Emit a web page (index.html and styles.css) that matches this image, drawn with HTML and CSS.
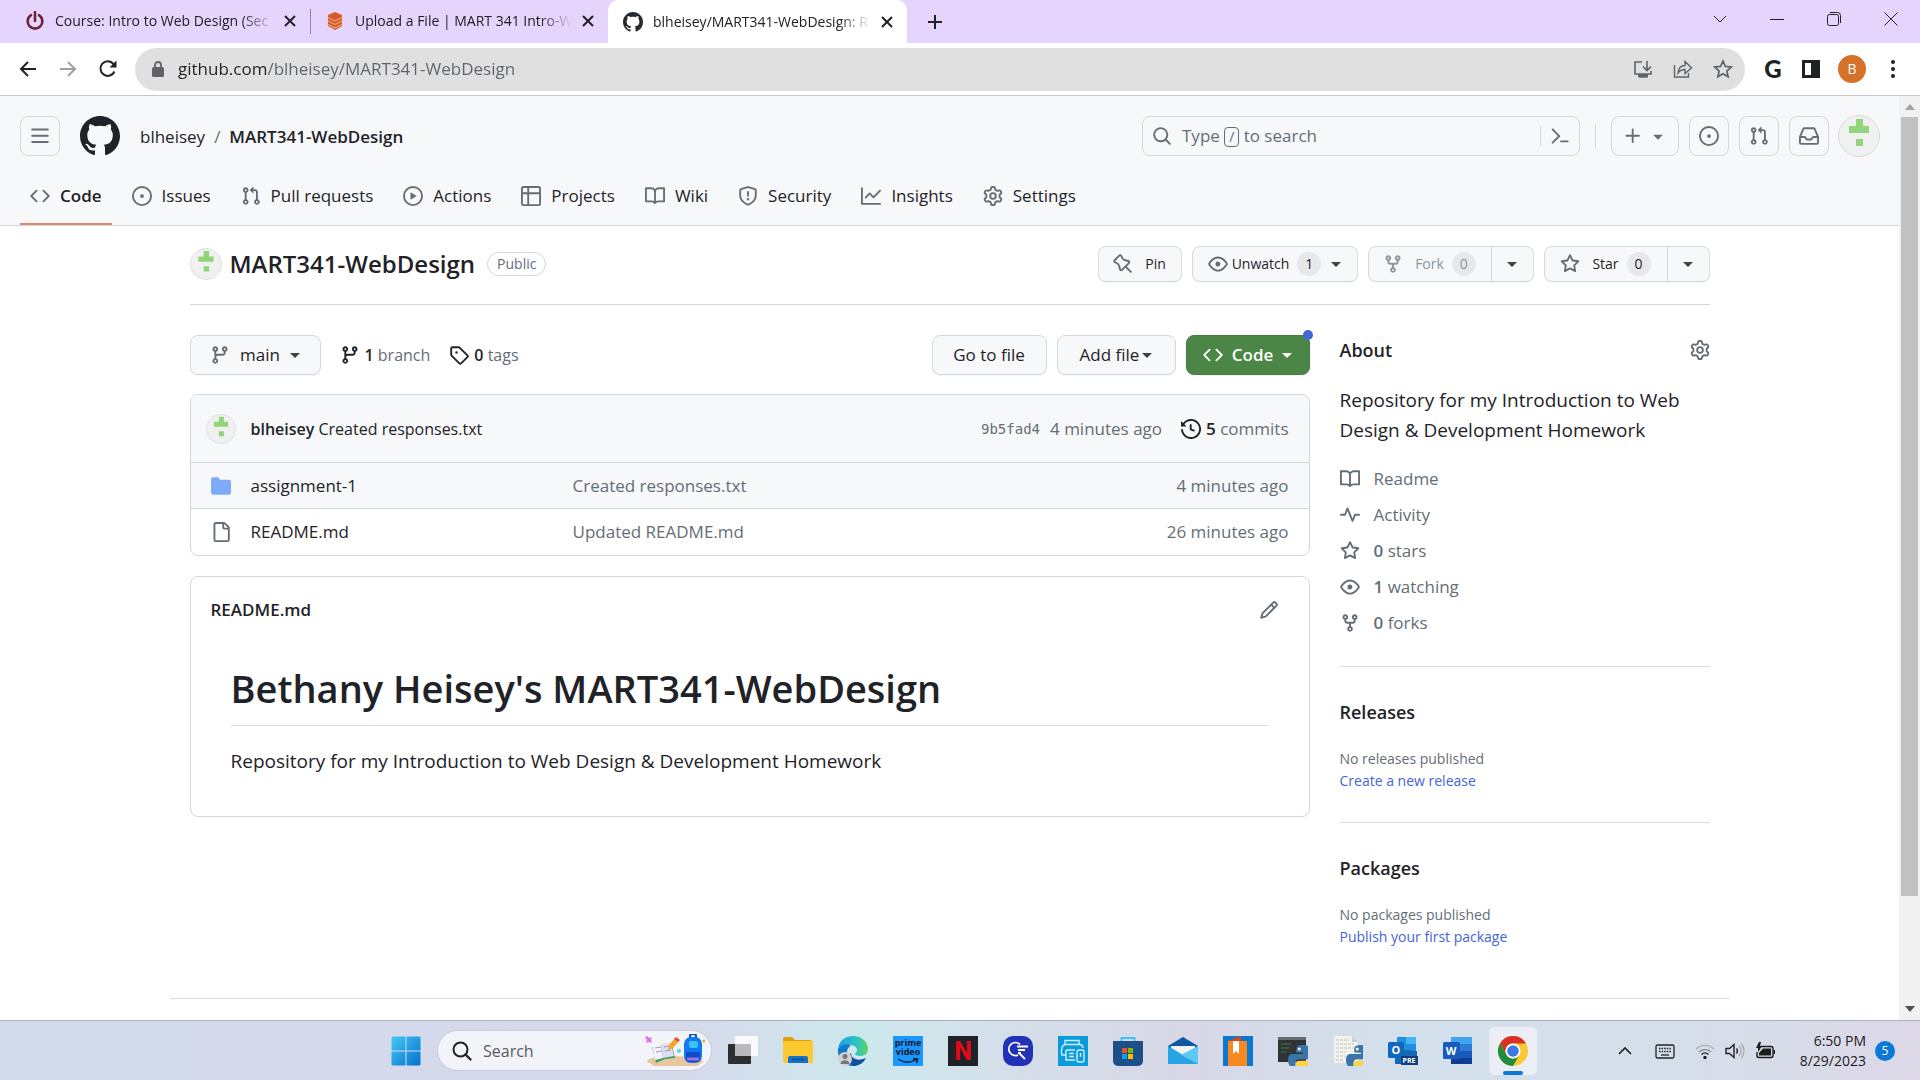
FILE: index.html
```html
<!DOCTYPE html>
<html lang="en">
<head>
<meta charset="utf-8">
<title>blheisey/MART341-WebDesign</title>
<link rel="stylesheet" href="styles.css">
</head>
<body>
<svg class="sprite" aria-hidden="true">
  <symbol id="i-code" viewBox="0 0 16 16"><path d="M4.72 3.22a.75.75 0 011.06 1.06L2.06 8l3.72 3.72a.75.75 0 11-1.06 1.06L.47 8.53a.75.75 0 010-1.06l4.25-4.25zm6.56 0a.75.75 0 10-1.06 1.06L13.94 8l-3.72 3.72a.75.75 0 101.06 1.06l4.25-4.25a.75.75 0 000-1.06l-4.25-4.25z"/></symbol>
  <symbol id="i-issue" viewBox="0 0 16 16"><path d="M8 9.5a1.5 1.5 0 100-3 1.5 1.5 0 000 3z"/><path d="M8 0a8 8 0 100 16A8 8 0 008 0zM1.5 8a6.5 6.5 0 1113 0 6.5 6.5 0 01-13 0z"/></symbol>
  <symbol id="i-pr" viewBox="0 0 16 16"><path d="M1.5 3.25a2.25 2.25 0 1 1 3 2.122v5.256a2.251 2.251 0 1 1-1.5 0V5.372A2.25 2.25 0 0 1 1.5 3.25Zm5.677-.177L9.573.677A.25.25 0 0 1 10 .854V2.5h1A2.5 2.5 0 0 1 13.5 5v5.628a2.251 2.251 0 1 1-1.5 0V5a1 1 0 0 0-1-1h-1v1.646a.25.25 0 0 1-.427.177L7.177 3.427a.25.25 0 0 1 0-.354ZM3.75 2.5a.75.75 0 1 0 0 1.5.75.75 0 0 0 0-1.5Zm0 9.5a.75.75 0 1 0 0 1.5.75.75 0 0 0 0-1.5Zm8.25.75a.75.75 0 1 0 1.5 0 .75.75 0 0 0-1.5 0Z"/></symbol>
  <symbol id="i-play" viewBox="0 0 16 16"><path d="M8 0a8 8 0 1 1 0 16A8 8 0 0 1 8 0ZM1.5 8a6.5 6.5 0 1 0 13 0 6.5 6.5 0 0 0-13 0Zm4.879-2.773 4.264 2.559a.25.25 0 0 1 0 .428l-4.264 2.559A.25.25 0 0 1 6 10.559V5.442a.25.25 0 0 1 .379-.215Z"/></symbol>
  <symbol id="i-table" viewBox="0 0 16 16"><path d="M0 1.75C0 .784.784 0 1.75 0h12.5C15.216 0 16 .784 16 1.75v12.5A1.75 1.75 0 0 1 14.25 16H1.75A1.75 1.75 0 0 1 0 14.25ZM6.5 6.5v8h7.75a.25.25 0 0 0 .25-.25V6.5Zm8-1.5V1.75a.25.25 0 0 0-.25-.25H6.5V5Zm-13 1.5v7.75c0 .138.112.25.25.25H5v-8ZM5 5V1.5H1.75a.25.25 0 0 0-.25.25V5Z"/></symbol>
  <symbol id="i-book" viewBox="0 0 16 16"><path d="M0 1.75A.75.75 0 0 1 .75 1h4.253c1.227 0 2.317.59 3 1.501A3.743 3.743 0 0 1 11.006 1h4.245a.75.75 0 0 1 .75.75v10.5a.75.75 0 0 1-.75.75h-4.507a2.25 2.25 0 0 0-1.591.659l-.622.621a.75.75 0 0 1-1.06 0l-.622-.621A2.25 2.25 0 0 0 5.258 13H.75a.75.75 0 0 1-.75-.75Zm7.251 10.324.004-5.073-.002-2.253A2.25 2.25 0 0 0 5.003 2.5H1.5v9h3.757a3.75 3.75 0 0 1 1.994.574ZM8.755 4.75l-.004 7.322a3.752 3.752 0 0 1 1.992-.572H14.5v-9h-3.495a2.25 2.25 0 0 0-2.25 2.25Z"/></symbol>
  <symbol id="i-shield" viewBox="0 0 16 16"><path d="M7.467.133a1.748 1.748 0 0 1 1.066 0l5.25 1.68A1.75 1.75 0 0 1 15 3.48V7c0 1.566-.32 3.182-1.303 4.682-.983 1.498-2.585 2.813-5.032 3.855a1.697 1.697 0 0 1-1.33 0c-2.447-1.042-4.049-2.357-5.032-3.855C1.32 10.182 1 8.566 1 7V3.48a1.75 1.75 0 0 1 1.217-1.667Zm.61 1.429a.25.25 0 0 0-.153 0l-5.25 1.68a.25.25 0 0 0-.174.238V7c0 1.358.275 2.666 1.057 3.86.784 1.194 2.121 2.34 4.366 3.297a.196.196 0 0 0 .154 0c2.245-.956 3.582-2.104 4.366-3.298C13.225 9.666 13.5 8.36 13.5 7V3.48a.251.251 0 0 0-.174-.237l-5.25-1.68ZM8.75 4.75v3a.75.75 0 0 1-1.5 0v-3a.75.75 0 0 1 1.5 0ZM9 10.5a1 1 0 1 1-2 0 1 1 0 0 1 2 0Z"/></symbol>
  <symbol id="i-graph" viewBox="0 0 16 16"><path d="M1.5 1.75V13.5h13.75a.75.75 0 0 1 0 1.5H.75a.75.75 0 0 1-.75-.75V1.75a.75.75 0 0 1 1.5 0Zm14.28 2.53-5.25 5.25a.75.75 0 0 1-1.06 0L7 7.06 4.28 9.78a.751.751 0 0 1-1.042-.018.751.751 0 0 1-.018-1.042l3.25-3.25a.75.75 0 0 1 1.06 0L10 7.94l4.72-4.72a.751.751 0 0 1 1.042.018.751.751 0 0 1 .018 1.042Z"/></symbol>
  <symbol id="i-gear" viewBox="0 0 16 16"><path d="M8 0a8.2 8.2 0 0 1 .701.031C9.444.095 9.99.645 10.16 1.29l.288 1.107c.018.066.079.158.212.224.231.114.454.243.668.386.123.082.233.09.299.071l1.103-.303c.644-.176 1.392.021 1.82.63.27.385.506.792.704 1.218.315.675.111 1.422-.364 1.891l-.814.806c-.049.048-.098.147-.088.294.016.257.016.515 0 .772-.01.147.038.246.088.294l.814.806c.475.469.679 1.216.364 1.891a7.977 7.977 0 0 1-.704 1.217c-.428.61-1.176.807-1.82.63l-1.102-.302c-.067-.019-.177-.011-.3.071a5.909 5.909 0 0 1-.668.386c-.133.066-.194.158-.211.224l-.29 1.106c-.168.646-.715 1.196-1.458 1.26a8.006 8.006 0 0 1-1.402 0c-.743-.064-1.289-.614-1.458-1.26l-.289-1.106c-.018-.066-.079-.158-.212-.224a5.738 5.738 0 0 1-.668-.386c-.123-.082-.233-.09-.299-.071l-1.103.303c-.644.176-1.392-.021-1.82-.63a8.12 8.12 0 0 1-.704-1.218c-.315-.675-.111-1.422.363-1.891l.815-.806c.05-.048.098-.147.088-.294a6.214 6.214 0 0 1 0-.772c.01-.147-.038-.246-.088-.294l-.815-.806C.635 6.045.431 5.298.746 4.623a7.92 7.92 0 0 1 .704-1.217c.428-.61 1.176-.807 1.82-.63l1.102.302c.067.019.177.011.3-.071.214-.143.437-.272.668-.386.133-.066.194-.158.211-.224l.29-1.106C6.009.645 6.556.095 7.299.03 7.53.01 7.764 0 8 0Zm-.571 1.525c-.036.003-.108.036-.137.146l-.289 1.105c-.147.561-.549.967-.998 1.189-.173.086-.34.183-.5.29-.417.278-.97.423-1.529.27l-1.103-.303c-.109-.03-.175.016-.195.045-.22.312-.412.644-.573.99-.014.031-.021.11.059.19l.815.806c.411.406.562.957.53 1.456a4.709 4.709 0 0 0 0 .582c.032.499-.119 1.05-.53 1.456l-.815.806c-.081.08-.073.159-.059.19.162.346.353.677.573.989.02.03.085.076.195.046l1.102-.303c.56-.153 1.113-.008 1.53.27.161.107.328.204.501.29.447.222.85.629.997 1.189l.289 1.105c.029.109.101.143.137.146a6.6 6.6 0 0 0 1.142 0c.036-.003.108-.036.137-.146l.289-1.105c.147-.561.549-.967.998-1.189.173-.086.34-.183.5-.29.417-.278.97-.423 1.529-.27l1.103.303c.109.029.175-.016.195-.045.22-.313.411-.644.573-.99.014-.031.021-.11-.059-.19l-.815-.806c-.411-.406-.562-.957-.53-1.456a4.709 4.709 0 0 0 0-.582c-.032-.499.119-1.05.53-1.456l.815-.806c.081-.08.073-.159.059-.19a6.464 6.464 0 0 0-.573-.989c-.02-.03-.085-.076-.195-.046l-1.102.303c-.56.153-1.113.008-1.53-.27a4.44 4.44 0 0 0-.501-.29c-.447-.222-.85-.629-.997-1.189l-.289-1.105c-.029-.11-.101-.143-.137-.146a6.6 6.6 0 0 0-1.142 0ZM11 8a3 3 0 1 1-6 0 3 3 0 0 1 6 0ZM9.5 8a1.5 1.5 0 1 0-3.001.001A1.5 1.5 0 0 0 9.5 8Z"/></symbol>
  <symbol id="i-search" viewBox="0 0 16 16"><path d="M10.68 11.74a6 6 0 0 1-7.922-8.982 6 6 0 0 1 8.982 7.922l3.04 3.04a.749.749 0 0 1-.326 1.275.749.749 0 0 1-.734-.215ZM11.5 7a4.499 4.499 0 1 0-8.997 0A4.499 4.499 0 0 0 11.5 7Z"/></symbol>
  <symbol id="i-bars" viewBox="0 0 16 16"><path d="M1 2.75A.75.75 0 0 1 1.75 2h12.5a.75.75 0 0 1 0 1.5H1.75A.75.75 0 0 1 1 2.75Zm0 5A.75.75 0 0 1 1.75 7h12.5a.75.75 0 0 1 0 1.5H1.75A.75.75 0 0 1 1 7.75ZM1.75 12h12.5a.75.75 0 0 1 0 1.5H1.75a.75.75 0 0 1 0-1.5Z"/></symbol>
  <symbol id="i-github" viewBox="0 0 16 16"><path d="M8 0C3.58 0 0 3.58 0 8c0 3.54 2.29 6.53 5.47 7.59.4.07.55-.17.55-.38 0-.19-.01-.82-.01-1.49-2.01.37-2.53-.49-2.69-.94-.09-.23-.48-.94-.82-1.13-.28-.15-.68-.52-.01-.53.63-.01 1.08.58 1.23.82.72 1.21 1.87.87 2.33.66.07-.52.28-.87.51-1.07-1.78-.2-3.64-.89-3.64-3.95 0-.87.31-1.59.82-2.15-.08-.2-.36-1.02.08-2.12 0 0 .67-.21 2.2.82.64-.18 1.32-.27 2-.27.68 0 1.36.09 2 .27 1.53-1.04 2.2-.82 2.2-.82.44 1.1.16 1.92.08 2.12.51.56.82 1.27.82 2.15 0 3.07-1.87 3.75-3.65 3.95.29.25.54.73.54 1.48 0 1.07-.01 1.93-.01 2.2 0 .21.15.46.55.38A8.013 8.013 0 0016 8c0-4.42-3.58-8-8-8z"/></symbol>
  <symbol id="i-prompt" viewBox="0 0 16 16"><path d="m6.354 8.04-4.773 4.773a.75.75 0 1 0 1.061 1.06L7.945 8.57a.75.75 0 0 0 0-1.06L2.642 2.206a.75.75 0 0 0-1.06 1.061L6.353 8.04ZM8.75 11.5a.75.75 0 0 0 0 1.5h5.5a.75.75 0 0 0 0-1.5h-5.5Z"/></symbol>
  <symbol id="i-plus" viewBox="0 0 16 16"><path d="M7.75 2a.75.75 0 0 1 .75.75V7h4.25a.75.75 0 0 1 0 1.5H8.5v4.25a.75.75 0 0 1-1.5 0V8.5H2.75a.75.75 0 0 1 0-1.5H7V2.75A.75.75 0 0 1 7.75 2Z"/></symbol>
  <symbol id="i-inbox" viewBox="0 0 16 16"><path d="M2.8 2.06A1.75 1.75 0 0 1 4.41 1h7.18c.7 0 1.333.417 1.61 1.06l2.74 6.395c.04.093.06.194.06.295v4.5A1.75 1.75 0 0 1 14.25 15H1.75A1.75 1.75 0 0 1 0 13.25v-4.5c0-.101.02-.202.06-.295Zm1.61.44a.25.25 0 0 0-.23.152L1.887 8H4.75a.75.75 0 0 1 .6.3L6.625 10h2.75l1.275-1.7a.75.75 0 0 1 .6-.3h2.863L11.82 2.652a.25.25 0 0 0-.23-.152Zm10.09 7h-2.875l-1.275 1.7a.75.75 0 0 1-.6.3h-3.5a.75.75 0 0 1-.6-.3L4.375 9.5H1.5v3.75c0 .138.112.25.25.25h12.5a.25.25 0 0 0 .25-.25Z"/></symbol>
  <symbol id="i-caret" viewBox="0 0 16 16"><path d="m4.427 7.427 3.396 3.396a.25.25 0 0 0 .354 0l3.396-3.396A.25.25 0 0 0 11.396 7H4.604a.25.25 0 0 0-.177.427Z"/></symbol>
  <symbol id="i-pin" viewBox="0 0 16 16"><path d="M4.456.734a1.75 1.75 0 012.826.504l.613 1.327a3.081 3.081 0 002.084 1.707l2.454.584c1.332.317 1.8 1.972.832 2.94L11.06 10l3.72 3.72a.75.75 0 11-1.061 1.06L10 11.06l-2.204 2.205c-.968.968-2.623.5-2.94-.832l-.584-2.454a3.081 3.081 0 00-1.707-2.084l-1.327-.613a1.75 1.75 0 01-.504-2.826L4.456.734zM5.92 1.866a.25.25 0 00-.404-.072L1.794 5.516a.25.25 0 00.072.404l1.328.613A4.582 4.582 0 015.73 9.63l.584 2.454a.25.25 0 00.42.12l5.47-5.47a.25.25 0 00-.12-.42L9.63 5.73a4.581 4.581 0 01-3.098-2.537L5.92 1.866z"/></symbol>
  <symbol id="i-eye" viewBox="0 0 16 16"><path d="M8 2c1.981 0 3.671.992 4.933 2.078 1.27 1.091 2.187 2.345 2.637 3.023a1.62 1.62 0 0 1 0 1.798c-.45.678-1.367 1.932-2.637 3.023C11.67 13.008 9.981 14 8 14c-1.981 0-3.671-.992-4.933-2.078C1.797 10.83.88 9.576.43 8.898a1.62 1.62 0 0 1 0-1.798c.45-.677 1.367-1.931 2.637-3.022C4.33 2.992 6.019 2 8 2ZM1.679 7.932a.12.12 0 0 0 0 .136c.411.622 1.241 1.75 2.366 2.717C5.176 11.758 6.527 12.5 8 12.5c1.473 0 2.825-.742 3.955-1.715 1.124-.967 1.954-2.096 2.366-2.717a.12.12 0 0 0 0-.136c-.412-.621-1.242-1.75-2.366-2.717C10.824 4.242 9.473 3.5 8 3.5c-1.473 0-2.825.742-3.955 1.715-1.124.967-1.954 2.096-2.366 2.717ZM8 10a2 2 0 1 1-.001-3.999A2 2 0 0 1 8 10Z"/></symbol>
  <symbol id="i-fork" viewBox="0 0 16 16"><path d="M5 5.372v.878c0 .414.336.75.75.75h4.5a.75.75 0 0 0 .75-.75v-.878a2.25 2.25 0 1 1 1.5 0v.878a2.25 2.25 0 0 1-2.25 2.25h-1.5v2.128a2.251 2.251 0 1 1-1.5 0V8.5h-1.5A2.25 2.25 0 0 1 3.5 6.25v-.878a2.25 2.25 0 1 1 1.5 0ZM5 3.25a.75.75 0 1 0-1.5 0 .75.75 0 0 0 1.5 0Zm6.75.75a.75.75 0 1 0 0-1.5.75.75 0 0 0 0 1.5Zm-3 8.75a.75.75 0 1 0-1.5 0 .75.75 0 0 0 1.5 0Z"/></symbol>
  <symbol id="i-star" viewBox="0 0 16 16"><path d="M8 .25a.75.75 0 0 1 .673.418l1.882 3.815 4.21.612a.75.75 0 0 1 .416 1.279l-3.046 2.97.719 4.192a.751.751 0 0 1-1.088.791L8 12.347l-3.766 1.98a.75.75 0 0 1-1.088-.79l.72-4.194L.818 6.374a.75.75 0 0 1 .416-1.28l4.21-.611L7.327.668A.75.75 0 0 1 8 .25Zm0 2.445L6.615 5.5a.75.75 0 0 1-.564.41l-3.097.45 2.24 2.184a.75.75 0 0 1 .216.664l-.528 3.084 2.769-1.456a.75.75 0 0 1 .698 0l2.77 1.456-.53-3.084a.75.75 0 0 1 .216-.664l2.24-2.183-3.096-.45a.75.75 0 0 1-.564-.41L8 2.694Z"/></symbol>
  <symbol id="i-branch" viewBox="0 0 16 16"><path d="M9.5 3.25a2.25 2.25 0 1 1 3 2.122V6A2.5 2.5 0 0 1 10 8.5H6a1 1 0 0 0-1 1v1.128a2.251 2.251 0 1 1-1.5 0V5.372a2.25 2.25 0 1 1 1.5 0v1.836A2.493 2.493 0 0 1 6 7h4a1 1 0 0 0 1-1v-.628A2.25 2.25 0 0 1 9.5 3.25Zm-6 0a.75.75 0 1 0 1.5 0 .75.75 0 0 0-1.5 0Zm8.25-.75a.75.75 0 1 0 0 1.5.75.75 0 0 0 0-1.5ZM4.25 12a.75.75 0 1 0 0 1.5.75.75 0 0 0 0-1.5Z"/></symbol>
  <symbol id="i-tag" viewBox="0 0 16 16"><path d="M1 7.775V2.75C1 1.784 1.784 1 2.75 1h5.025c.464 0 .91.184 1.238.513l6.25 6.25a1.75 1.75 0 0 1 0 2.474l-5.026 5.026a1.75 1.75 0 0 1-2.474 0l-6.25-6.25A1.752 1.752 0 0 1 1 7.775Zm1.5 0c0 .066.026.13.073.177l6.25 6.25a.25.25 0 0 0 .354 0l5.025-5.025a.25.25 0 0 0 0-.354l-6.25-6.25a.25.25 0 0 0-.177-.073H2.75a.25.25 0 0 0-.25.25ZM6 5a1 1 0 1 1 0 2 1 1 0 0 1 0-2Z"/></symbol>
  <symbol id="i-history" viewBox="0 0 16 16"><path d="m.427 1.927 1.215 1.215a8.002 8.002 0 1 1-1.6 5.685.75.75 0 1 1 1.493-.154 6.5 6.5 0 1 0 1.18-4.458l1.358 1.358A.25.25 0 0 1 3.896 6H.25A.25.25 0 0 1 0 5.75V2.104a.25.25 0 0 1 .427-.177ZM7.75 4a.75.75 0 0 1 .75.75v2.992l2.028.812a.75.75 0 0 1-.557 1.392l-2.5-1A.751.751 0 0 1 7 8.25v-3.5A.75.75 0 0 1 7.75 4Z"/></symbol>
  <symbol id="i-folder" viewBox="0 0 16 16"><path d="M1.75 1A1.75 1.75 0 0 0 0 2.75v10.5C0 14.216.784 15 1.75 15h12.5A1.75 1.75 0 0 0 16 13.25v-8.5A1.75 1.75 0 0 0 14.25 3H7.5a.25.25 0 0 1-.2-.1l-.9-1.2C6.07 1.26 5.55 1 5 1H1.75Z"/></symbol>
  <symbol id="i-file" viewBox="0 0 16 16"><path d="M2 1.75C2 .784 2.784 0 3.75 0h6.586c.464 0 .909.184 1.237.513l2.914 2.914c.329.328.513.773.513 1.237v9.586A1.75 1.75 0 0 1 13.25 16h-9.5A1.75 1.75 0 0 1 2 14.25Zm1.75-.25a.25.25 0 0 0-.25.25v12.5c0 .138.112.25.25.25h9.5a.25.25 0 0 0 .25-.25V6h-2.75A1.75 1.75 0 0 1 9 4.25V1.5Zm6.75.062V4.25c0 .138.112.25.25.25h2.688l-.011-.013-2.914-2.914-.013-.011Z"/></symbol>
  <symbol id="i-pencil" viewBox="0 0 16 16"><path d="M11.013 1.427a1.75 1.75 0 0 1 2.474 0l1.086 1.086a1.75 1.75 0 0 1 0 2.474l-8.61 8.61c-.21.21-.47.364-.756.445l-3.251.93a.75.75 0 0 1-.927-.928l.929-3.25c.081-.286.235-.547.445-.758l8.61-8.61Zm.176 4.823L9.75 4.81l-6.286 6.287a.253.253 0 0 0-.064.108l-.558 1.953 1.953-.558a.253.253 0 0 0 .108-.064Zm1.238-3.763a.25.25 0 0 0-.354 0L10.811 3.75l1.439 1.44 1.263-1.263a.25.25 0 0 0 0-.354Z"/></symbol>
  <symbol id="i-pulse" viewBox="0 0 16 16"><path d="M6 2c.306 0 .582.187.696.471L10 10.731l1.304-3.26A.751.751 0 0 1 12 7h3.25a.75.75 0 0 1 0 1.5h-2.742l-1.812 4.528a.751.751 0 0 1-1.392 0L6 4.77 4.696 8.03A.75.75 0 0 1 4 8.5H.75a.75.75 0 0 1 0-1.5h2.742l1.812-4.529A.751.751 0 0 1 6 2Z"/></symbol>
  <symbol id="i-close" viewBox="0 0 12 12"><path d="M1 1l10 10M11 1L1 11" fill="none" stroke="currentColor" stroke-width="2"/></symbol>
  <symbol id="i-avatar" viewBox="0 0 42 42"><circle cx="21" cy="21" r="20.5" fill="#f0f0f0" stroke="#d8dbde"/><path d="M18 4h7v7h6v7H11v-7h7zM18 24h7v7h-7z" fill="#92d47a"/></symbol>
  <symbol id="i-python" viewBox="0 0 20 20"><path d="M10 0c-4 0-4.500 1.500-4.500 3v2H10v1H3C1 6 0 7.500 0 10s1 4.500 3 4.500h2V12c0-1.500 1-2.500 2.500-2.500h5c1.500 0 2.500-1 2.500-2.500V3c0-2-2-3-5-3z" fill="#3a74a8"/><path d="M10 20c4 0 4.500-1.500 4.500-3v-2H10v-1h7c2 0 3-1.500 3-4s-1-4.500-3-4.500h-2V8c0 1.500-1 2.500-2.500 2.500h-5C6 10.500 5 11.500 5 13v4c0 2 2 3 5 3z" fill="#fdd33f"/><circle cx="7.500" cy="2.700" r="1" fill="#fff"/><circle cx="12.500" cy="17.300" r="1" fill="#fff"/></symbol>
</svg>

<header class="browser">
  <div class="tabstrip">
    <div class="tab">
      <svg class="favicon" viewBox="0 0 20 20"><path d="M6 4.200a7.300 7.300 0 1 0 8 0M10 1v9" fill="none" stroke="#6d2436" stroke-width="2.600" stroke-linecap="round"/></svg>
      <span class="tab-title">Course: Intro to Web Design (Sec</span>
      <button class="tab-close" aria-label="Close tab"><svg><use href="#i-close"/></svg></button>
    </div>
    <div class="tab tab-second">
      <svg class="favicon" viewBox="0 0 20 20"><path d="M10 1l7 3v11l-7 4-7-4V4z" fill="#d55b27"/><path d="M2 6l8 4 8-4M2 9.500l8 4 8-4M2 13l8 4 8-4" fill="none" stroke="#f3b596" stroke-width="1"/></svg>
      <span class="tab-title">Upload a File | MART 341 Intro-W</span>
      <button class="tab-close" aria-label="Close tab"><svg><use href="#i-close"/></svg></button>
    </div>
    <div class="tab tab-active">
      <svg class="favicon"><use href="#i-github"/></svg>
      <span class="tab-title">blheisey/MART341-WebDesign: R</span>
      <button class="tab-close" aria-label="Close tab"><svg><use href="#i-close"/></svg></button>
    </div>
    <button class="new-tab" aria-label="New tab"><svg viewBox="0 0 16 16"><path d="M8 1v14M1 8h14" stroke="currentColor" stroke-width="2"/></svg></button>
    <div class="window-controls">
      <button aria-label="Search tabs"><svg viewBox="0 0 14 14"><path d="M1 4l6 6 6-6" fill="none" stroke="currentColor"/></svg></button>
      <button aria-label="Minimize"><svg viewBox="0 0 14 14"><path d="M0 7.500h14" stroke="currentColor"/></svg></button>
      <button aria-label="Restore"><svg viewBox="0 0 14 14"><rect x=".5" y="2.500" width="11" height="11" rx="2" fill="none" stroke="currentColor"/><path d="M3 .5h7.500a3 3 0 0 1 3 3V11" fill="none" stroke="currentColor"/></svg></button>
      <button aria-label="Close"><svg viewBox="0 0 14 14"><path d="M.5.5l13 13M13.500.5l-13 13" stroke="currentColor"/></svg></button>
    </div>
  </div>
  <div class="toolbar">
    <button class="nav-button" aria-label="Back"><svg viewBox="0 0 20 20"><path d="M18 10H3M10 3l-7 7 7 7" fill="none" stroke="currentColor" stroke-width="2"/></svg></button>
    <button class="nav-button nav-off" aria-label="Forward"><svg viewBox="0 0 20 20"><path d="M2 10h15M10 3l7 7-7 7" fill="none" stroke="currentColor" stroke-width="2"/></svg></button>
    <button class="nav-button" aria-label="Reload"><svg viewBox="0 0 20 20"><path d="M16.500 12.500A7.300 7.300 0 1 1 15.500 5" fill="none" stroke="currentColor" stroke-width="2"/><path d="M18.500 1.500v7h-7z" fill="currentColor"/></svg></button>
    <div class="omnibox">
      <svg class="lock" viewBox="0 0 12 16"><rect y="6" width="12" height="10" rx="1.500" fill="#5f6368"/><path d="M3 6V4a3 3 0 0 1 6 0v2" fill="none" stroke="#5f6368" stroke-width="1.800"/></svg>
      <input class="address" aria-label="Address" value="github.com/blheisey/MART341-WebDesign">
      <button aria-label="Install page"><svg viewBox="0 0 20 20"><path d="M9 3H2v12h16v-3M6 18h8v-2M14 2v9M10 7.500l4 4 4-4" fill="none" stroke="currentColor" stroke-width="1.600"/><path d="M5 15h10v3H5z" fill="currentColor"/></svg></button>
      <button aria-label="Share"><svg viewBox="0 0 20 20"><path d="M1.500 6v12h14v-4M5 14c.5-5 3-7.500 7-7.500V2.500L18.500 9 12 14.500v-4c-3 0-5 1-7 3.500z" fill="none" stroke="currentColor" stroke-width="1.400"/></svg></button>
      <button aria-label="Bookmark"><svg viewBox="0 0 20 20"><path d="M10 2l2.400 5.400 5.900.6-4.400 4 1.200 5.800L10 14.800l-5.100 3L6.100 12 1.700 8l5.900-.6z" fill="none" stroke="currentColor" stroke-width="1.700"/></svg></button>
    </div>
    <div class="extensions">
      <button class="ext-g" aria-label="Google extension">G</button>
      <button aria-label="Side panel"><svg viewBox="0 0 18 18"><path d="M0 0h18v18H0zM3 3v12h6V3z" fill="currentColor" fill-rule="evenodd"/></svg></button>
      <button class="profile">B</button>
      <button aria-label="Menu"><svg viewBox="0 0 18 18"><circle cx="9" cy="2" r="2"/><circle cx="9" cy="9" r="2"/><circle cx="9" cy="16" r="2"/></svg></button>
    </div>
  </div>
</header>

<div class="viewport">
  <div class="page">
    <header class="app-header">
      <div class="app-bar">
        <button class="square" aria-label="Open menu"><svg class="icon"><use href="#i-bars"/></svg></button>
        <a class="logo" href="#" aria-label="Homepage"><svg><use href="#i-github"/></svg></a>
        <nav class="crumbs"><a href="#">blheisey</a><span class="slash">/</span><a class="strong" href="#">MART341-WebDesign</a></nav>
        <div class="search">
          <button class="search-open"><svg class="icon"><use href="#i-search"/></svg><span>Type <kbd>/</kbd> to search</span></button>
          <button class="search-command" aria-label="Command palette"><svg class="icon"><use href="#i-prompt"/></svg></button>
        </div>
        <div class="app-actions">
          <button class="square create" aria-label="Create new"><svg class="icon"><use href="#i-plus"/></svg><svg class="icon"><use href="#i-caret"/></svg></button>
          <a class="square" href="#" aria-label="Issues"><svg class="icon"><use href="#i-issue"/></svg></a>
          <a class="square" href="#" aria-label="Pull requests"><svg class="icon"><use href="#i-pr"/></svg></a>
          <a class="square" href="#" aria-label="Notifications"><svg class="icon"><use href="#i-inbox"/></svg></a>
          <button class="user" aria-label="Open user menu"><svg><use href="#i-avatar"/></svg></button>
        </div>
      </div>
      <nav class="repo-nav">
        <a class="current" href="#"><svg class="icon"><use href="#i-code"/></svg>Code</a>
        <a href="#"><svg class="icon"><use href="#i-issue"/></svg>Issues</a>
        <a href="#"><svg class="icon"><use href="#i-pr"/></svg>Pull requests</a>
        <a href="#"><svg class="icon"><use href="#i-play"/></svg>Actions</a>
        <a href="#"><svg class="icon"><use href="#i-table"/></svg>Projects</a>
        <a href="#"><svg class="icon"><use href="#i-book"/></svg>Wiki</a>
        <a href="#"><svg class="icon"><use href="#i-shield"/></svg>Security</a>
        <a href="#"><svg class="icon"><use href="#i-graph"/></svg>Insights</a>
        <a href="#"><svg class="icon"><use href="#i-gear"/></svg>Settings</a>
      </nav>
    </header>

    <main class="container">
      <div class="repo-head">
        <svg class="avatar-32"><use href="#i-avatar"/></svg>
        <h1><a href="#">MART341-WebDesign</a></h1>
        <span class="label">Public</span>
        <div class="repo-actions">
          <button class="btn btn-sm pin"><svg class="icon"><use href="#i-pin"/></svg>Pin</button>
          <button class="btn btn-sm watch"><svg class="icon"><use href="#i-eye"/></svg>Unwatch<span class="count">1</span><i class="caret"></i></button>
          <div class="split split-off"><button class="btn btn-sm"><svg class="icon"><use href="#i-fork"/></svg>Fork<span class="count">0</span></button><button class="btn btn-sm more" aria-label="See your forks"><i class="caret"></i></button></div>
          <div class="split"><button class="btn btn-sm"><svg class="icon"><use href="#i-star"/></svg>Star<span class="count">0</span></button><button class="btn btn-sm more" aria-label="Add to list"><i class="caret"></i></button></div>
        </div>
      </div>

      <div class="columns">
        <div class="content">
          <div class="file-nav">
            <button class="btn branch"><svg class="icon"><use href="#i-branch"/></svg>main<i class="caret"></i></button>
            <a class="stat" href="#"><svg class="icon"><use href="#i-branch"/></svg><span><strong>1</strong> branch</span></a>
            <a class="stat" href="#"><svg class="icon"><use href="#i-tag"/></svg><span><strong>0</strong> tags</span></a>
            <div class="file-actions">
              <button class="btn go">Go to file</button>
              <button class="btn add">Add file<i class="caret"></i></button>
              <button class="btn primary"><svg class="icon"><use href="#i-code"/></svg>Code<i class="caret"></i><span class="dot"></span></button>
            </div>
          </div>

          <section class="box files">
            <div class="commit">
              <svg class="avatar-30"><use href="#i-avatar"/></svg>
              <span class="commit-text"><a class="strong" href="#">blheisey</a> <a href="#">Created responses.txt</a></span>
              <span class="commit-meta"><a class="sha" href="#">9b5fad4</a><span>4 minutes ago</span><a class="commits" href="#"><svg class="icon"><use href="#i-history"/></svg><span><strong>5</strong> commits</span></a></span>
            </div>
            <table>
              <tr class="hovered"><td class="kind"><svg class="icon folder"><use href="#i-folder"/></svg></td><td class="name"><a href="#">assignment-1</a></td><td><a class="muted" href="#">Created responses.txt</a></td><td class="age">4 minutes ago</td></tr>
              <tr><td class="kind"><svg class="icon"><use href="#i-file"/></svg></td><td class="name"><a href="#">README.md</a></td><td><a class="muted" href="#">Updated README.md</a></td><td class="age">26 minutes ago</td></tr>
            </table>
          </section>

          <section class="box readme">
            <div class="readme-head"><h2>README.md</h2><button aria-label="Edit README"><svg class="icon"><use href="#i-pencil"/></svg></button></div>
            <article>
              <h1>Bethany Heisey's MART341-WebDesign</h1>
              <p>Repository for my Introduction to Web Design &amp; Development Homework</p>
            </article>
          </section>
        </div>

        <aside class="sidebar">
          <section>
            <div class="side-title"><h2>About</h2><button aria-label="Edit repository details"><svg class="icon"><use href="#i-gear"/></svg></button></div>
            <p class="description">Repository for my Introduction to Web Design &amp; Development Homework</p>
            <ul>
              <li><a href="#"><svg class="icon"><use href="#i-book"/></svg>Readme</a></li>
              <li><a href="#"><svg class="icon"><use href="#i-pulse"/></svg>Activity</a></li>
              <li><a href="#"><svg class="icon"><use href="#i-star"/></svg><span><strong>0</strong> stars</span></a></li>
              <li><a href="#"><svg class="icon"><use href="#i-eye"/></svg><span><strong>1</strong> watching</span></a></li>
              <li><a href="#"><svg class="icon"><use href="#i-fork"/></svg><span><strong>0</strong> forks</span></a></li>
            </ul>
          </section>
          <section><h2>Releases</h2><p class="small">No releases published</p><a class="small link" href="#">Create a new release</a></section>
          <section><h2>Packages</h2><p class="small">No packages published</p><a class="small link" href="#">Publish your first package</a></section>
        </aside>
      </div>
    </main>
    <footer class="page-footer"></footer>
  </div>
  <div class="scrollbar"><i class="arrow-up"></i><div class="thumb"></div><i class="arrow-down"></i></div>
</div>

<footer class="taskbar">
  <div class="apps">
    <button aria-label="Start"><svg viewBox="0 0 30 30"><defs><linearGradient id="win" x2="1" y2="1"><stop stop-color="#45c8f8"/><stop offset="1" stop-color="#0470cc"/></linearGradient></defs><path d="M2 .5h12.500v14H.5V2A1.500 1.500 0 0 1 2 .5zM15.500.5H28A1.500 1.500 0 0 1 29.500 2v12.500h-14zM.5 15.500h14v14H2A1.500 1.500 0 0 1 .5 28zM15.500 15.500h14V28a1.500 1.500 0 0 1-1.500 1.500H15.500z" fill="url(#win)"/></svg></button>
    <div class="task-search">
      <svg class="task-glass" viewBox="0 0 20 20"><circle cx="8.500" cy="8.500" r="7" fill="none" stroke="#222" stroke-width="2"/><path d="M13.500 13.500l5 5" stroke="#222" stroke-width="2.400" stroke-linecap="round"/></svg>
      <input type="search" aria-label="Search" placeholder="Search">
      <svg class="task-art" viewBox="0 0 62 34"><ellipse cx="32" cy="27" rx="28" ry="5" fill="#e8c6a0"/><path d="M4 27h56l-5 5H11z" fill="#e8c6a0"/><path d="M4 2l2 2 3-1-1 3 1 3-3-1-3 1 1-3-2-3z" fill="#e46ee8"/><path d="M9 13l10-2 10 0 3 13-10 1-9 4z" fill="#3f9e62"/><path d="M9 11l9-1 2 14-8 2z" fill="#f4f3ff"/><path d="M18 10l10-1 3 13-11 2z" fill="#dfdcf4"/><path d="M12 14l6-1M13 18l6-1M21 13l6-1M22 17l6-1" stroke="#9a98b8"/><path d="M25 16l1-5 6-7 4 3-6 7z" fill="#f6a623"/><path d="M31 5l2-2 4 3-2 2z" fill="#e84c3d"/><circle cx="36" cy="17" r="2" fill="#55d0e8"/><circle cx="61" cy="7" r="1.500" fill="#f4a300"/><path d="M47 4V2a3 2 0 0 1 6 0v2" fill="none" stroke="#0b4fb0" stroke-width="2"/><rect x="41" y="3" width="18" height="26" rx="7" fill="#1279f2"/><rect x="46" y="7" width="9" height="7" rx="2" fill="#37c3f6"/><path d="M43 18h14v8a2 2 0 0 1-2 2H45a2 2 0 0 1-2-2z" fill="#0c4fc4"/><path d="M44 25h12" stroke="#9a73f0" stroke-width="3"/></svg>
    </div>
    <button aria-label="Task view"><svg viewBox="0 0 30 30"><rect y="8" width="23" height="20" rx="1" fill="#2e2e30"/><rect x="7" width="23" height="20" rx="1" fill="#fafafa"/><path d="M7 8h16v12H7z" fill="#b9b9bb"/></svg></button>
    <button aria-label="File Explorer"><svg viewBox="0 0 30 30"><path d="M0 3a2 2 0 0 1 2-2h7l3 3h16v6H0z" fill="#e0a008"/><rect y="5" width="30" height="22" rx="1" fill="#fdc930"/><path d="M5 27v-5a2 2 0 0 1 2-2h16a2 2 0 0 1 2 2v5z" fill="#1273c4"/><path d="M9 23.500h12" stroke="#0a4c92" stroke-width="1.500"/></svg></button>
    <button aria-label="Edge"><svg viewBox="0 0 30 30"><defs><linearGradient id="edge" x2="1"><stop stop-color="#1e9de0"/><stop offset=".6" stop-color="#2bc3c9"/><stop offset="1" stop-color="#5fd45a"/></linearGradient></defs><path d="M0 13C1 5 7 0 15 0c9 0 15 6 15 13 0 5-4 7-8 7-3 0-5-1-5-2 0-1 2-1 2-4 0-3-3-5-7-5-5 0-9 1-12 4z" fill="url(#edge)"/><path d="M0 13c3-4 9-6 13-3-5 1-7 13 4 17 4 1 8-2 10-4-2 4-7 7-12 7C6 30-1 22 0 13z" fill="#1178cc"/><path d="M13 17c0 5 6 9 15 5-3 6-9 8-13 8-5-3-6-10-2-13z" fill="#0f4f9f"/><circle cx="7" cy="23" r="7" fill="#d2d2d2"/><circle cx="7" cy="20.500" r="2.500" fill="#777"/><path d="M2.500 28c0-5 9-5 9 0z" fill="#777"/></svg></button>
    <button class="prime" aria-label="Prime Video"><span>prime</span><span>video</span><svg viewBox="0 0 22 6"><path d="M1 1c6 4 13 4 19 0M16 .8l4.500.2-1 4" fill="none" stroke="#0b1a2c" stroke-width="1.500"/></svg></button>
    <button aria-label="Netflix"><svg viewBox="0 0 30 30"><path d="M0 0h30v30H0z"/><text class="netflix" x="15" y="24" text-anchor="middle">N</text></svg></button>
    <button aria-label="Quick search"><svg viewBox="0 0 30 30"><rect width="30" height="30" rx="10" fill="#2232b8"/><path d="M17 8.500a6.500 6.500 0 1 0-2 10.500M16 17l6 6M14 10.500h11M15 14h7M15 17h3" fill="none" stroke="#fff" stroke-width="1.800"/></svg></button>
    <button aria-label="Printer app"><svg viewBox="0 0 30 30"><path d="M0 0h30v30H0z" fill="#0a9bdc"/><path d="M7 8V4.500h14V8M8 19H4c-1.500-4 0-10 3-10.500h15c2 .5 3 1.500 3 3.500M8 14h9M8 14v10h9M11 17.500h5M11 20.500h5" fill="none" stroke="#cdeefb" stroke-width="1.400"/><rect x="19" y="14" width="7" height="12" rx="2" fill="none" stroke="#cdeefb" stroke-width="1.400"/><path d="M22.500 17v4" stroke="#cdeefb" stroke-width="1.500"/></svg></button>
    <button aria-label="Microsoft Store"><svg viewBox="0 0 30 30"><path d="M8.500 6V2h13v4" fill="none" stroke="#3cc4f4" stroke-width="2"/><path d="M0 5h30v20a5 5 0 0 1-5 5H5a5 5 0 0 1-5-5z" fill="#1d5088"/><path d="M9 12h5v5H9z" fill="#f25022"/><path d="M15 12h5v5h-5z" fill="#7fba00"/><path d="M9 18h5v5H9z" fill="#00a4ef"/><path d="M15 18h5v5h-5z" fill="#ffb900"/></svg></button>
    <button aria-label="Mail"><svg viewBox="0 0 30 30"><path d="M0 10L15 1l15 9v6H0z" fill="#0f56a3"/><path d="M3 10h24v9H3z" fill="#f3f3f3"/><path d="M0 10l15 9 15-9v18H0z" fill="#27a3e6"/><path d="M30 10L13 19l17 9z" fill="#5cc9f5"/></svg></button>
    <button aria-label="Reader"><svg viewBox="0 0 30 30"><path d="M0 0h30v30H0z" fill="#0878d4"/><path d="M5 5l13-5v5z" fill="#d9481c"/><path d="M5 5h19v25H5z" fill="#f68a1f"/><path d="M10 5h6v13l-3-3-3 3z" fill="#fff"/></svg></button>
    <button aria-label="Python console"><svg viewBox="0 0 30 30"><path d="M0 1h28v25H0z" fill="#2f3436"/><path d="M0 1h28v3H0z" fill="#656b6e"/><path d="M3 8h10M3 12h8M3 16h5" stroke="#3f7a3b"/><svg x="10" y="9" width="20" height="20"><use href="#i-python"/></svg></svg></button>
    <button aria-label="Python file"><svg viewBox="0 0 30 30"><path d="M1 0h18l6 6v21H1z" fill="#f1f1ee"/><path d="M19 0v6h6z" fill="#cfcfcf"/><path d="M3 4h13M3 8h18M3 12h17M3 16h10M3 20h9M3 24h8" stroke="#c4c4c0" stroke-dasharray="3 1"/><svg x="13" y="9" width="17" height="17"><use href="#i-python"/></svg></svg></button>
    <button aria-label="Outlook"><svg viewBox="0 0 30 30"><path d="M9 1h19v14H9z" fill="#1f8fe0"/><path d="M18 1h10v7H18z" fill="#45b5f0"/><path d="M7 13l22 2v13H7z" fill="#1668b4"/><rect y="6" width="16" height="16" rx="1.500" fill="#1068bd"/><text class="office" x="8" y="18" text-anchor="middle">O</text><path d="M13 20h17v9H13z" fill="#123f7c"/><text class="pre" x="21" y="27" text-anchor="middle">PRE</text></svg></button>
    <button aria-label="Word"><svg viewBox="0 0 30 30"><path d="M8 1h21v7H8z" fill="#41a5ee"/><path d="M8 8h21v7H8z" fill="#2b7cd3"/><path d="M8 15h21v7H8z" fill="#185abd"/><path d="M8 22h21v6H8z" fill="#103f91"/><rect y="6" width="17" height="17" rx="1.500" fill="#185abd"/><text class="office" x="8" y="19" text-anchor="middle">W</text></svg></button>
    <button class="running" aria-label="Chrome"><svg viewBox="0 0 30 30"><circle cx="15" cy="15" r="15" fill="#fcc934"/><path d="M2 7.500A15 15 0 0 1 28 7.500H15a7.500 7.500 0 0 0-6.500 11.250z" fill="#d93025"/><path d="M2 7.500A15 15 0 0 0 15 30l6.500-11.250A7.500 7.500 0 0 1 8.500 18.750z" fill="#1e8e3e"/><circle cx="15" cy="15" r="7.500" fill="#fff"/><circle cx="15" cy="15" r="5.800" fill="#3b78e7"/></svg></button>
  </div>
  <div class="tray">
    <button aria-label="Show hidden icons"><svg viewBox="0 0 20 20"><path d="M4 13l6-6 6 6" fill="none" stroke="#222" stroke-width="1.600"/></svg></button>
    <button class="keyboard" aria-label="Touch keyboard"><svg viewBox="0 0 20 20"><rect x="1" y="4" width="18" height="13" rx="1.500" fill="none" stroke="#222" stroke-width="1.300"/><path d="M4 7.500h12M4 10.500h12" stroke="#222" stroke-width="1.500" stroke-dasharray="1.500 1.100"/><path d="M6 14h8" stroke="#222" stroke-width="1.300"/></svg></button>
    <button class="status" aria-label="Network, volume, battery">
      <svg viewBox="0 0 20 20"><path d="M1 8a13 13 0 0 1 18 0" fill="none" stroke="#a9a9b3" stroke-width="1.300"/><path d="M4 11a9 9 0 0 1 12 0" fill="none" stroke="#888" stroke-width="1.300"/><path d="M6.500 13.500a5 5 0 0 1 7 0" fill="none" stroke="#222" stroke-width="1.400"/><circle cx="10" cy="16.500" r="1.700"/></svg>
      <svg viewBox="0 0 20 20"><path d="M1 7.500v5h3.500L9 16.500v-13L4.500 7.500z" fill="none" stroke="#222" stroke-width="1.400"/><path d="M11.500 7.500a4 4 0 0 1 0 5" fill="none" stroke="#222" stroke-width="1.300"/><path d="M14 5a7 7 0 0 1 0 10M16.500 3a11 11 0 0 1 0 14" fill="none" stroke="#a2a2ac" stroke-width="1.200"/></svg>
      <svg viewBox="0 0 20 20"><path d="M6 5.500h10a2 2 0 0 1 2 2v7a2 2 0 0 1-2 2H4a2 2 0 0 1-2-2V11" fill="none" stroke="#1c1c1c" stroke-width="1.400"/><path d="M8 7.500h8v7H4V12z" fill="#1c1c1c"/><path d="M19.300 9v4" stroke="#1c1c1c" stroke-width="1.400"/><path d="M4 1L1 7h2v4l4-6H5l1-4z"/></svg>
    </button>
    <button class="clock"><span>6:50 PM</span><span>8/29/2023</span></button>
    <span class="badge">5</span>
  </div>
</footer>
</body>
</html>
```
FILE: styles.css
```css
* { box-sizing: border-box; }

:root {
  --text: #1f2328;
  --muted: #656d76;
  --border: #d0d7de;
  --subtle: #f6f8fa;
  --link: #4465d6;
}

body {
  margin: 0;
  height: 100vh;
  display: flex;
  flex-direction: column;
  overflow: hidden;
  background: #fff;
  color: var(--text);
  font-family: "Open Sans", "Noto Sans", sans-serif;
  font-size: 17px;
  line-height: 26px;
}

h1, h2, p, ul { margin: 0; padding: 0; }
ul { list-style: none; }
a { color: inherit; text-decoration: none; }
button, input { font: inherit; color: inherit; border: 0; background: none; padding: 0; margin: 0; }
svg { display: block; fill: currentColor; flex: none; }
strong, .strong { font-weight: 600; }
.sprite { position: absolute; width: 0; height: 0; }
.icon { width: 20px; height: 20px; color: var(--muted); }

/* Browser chrome */
.browser { flex: none; border-bottom: 1px solid #c8c8c8; }
.tabstrip { display: flex; height: 43px; background: #e5d4fc; color: #202124; font-size: 14px; }
.tab { display: flex; align-items: center; width: 299px; height: 42px; padding: 0 14px 0 15px; gap: 10px; }
.tab:first-child { width: 310px; padding-left: 25px; }
.tab-second { width: 298px; position: relative; }
.tab-second::before { content: ""; position: absolute; left: 0; top: 9px; width: 1px; height: 25px; background: #8f86a0; }
.tab-active { height: 43px; background: #fff; border-radius: 10px 10px 0 0; }
.favicon { width: 20px; height: 20px; color: #24292f; }
.tab-title { flex: 1; min-width: 0; overflow: hidden; white-space: nowrap; -webkit-mask-image: linear-gradient(90deg, #000 85%, transparent); mask-image: linear-gradient(90deg, #000 85%, transparent); }
.tab-close svg { width: 12px; height: 12px; }
.new-tab { width: 56px; display: grid; place-items: center; }
.new-tab svg { width: 16px; height: 16px; }
.window-controls { display: flex; margin-left: auto; margin-right: 1px; height: 37px; }
.window-controls button { width: 57px; display: grid; place-items: center; }
.window-controls svg { width: 14px; height: 14px; }

.toolbar { display: flex; align-items: center; height: 52px; padding: 0 18px 0 8px; color: #202124; }
.nav-button { width: 40px; height: 40px; display: grid; place-items: center; }
.nav-button svg { width: 20px; height: 20px; }
.nav-off { color: #a0a0a0; }
.omnibox { flex: 1; display: flex; align-items: center; gap: 20px; height: 43px; margin-left: 7px; padding: 0 12px 0 17px; border-radius: 22px; background: #e0e0e0; color: #5f6368; }
.lock { width: 12px; height: 16px; }
.address {
  flex: 1;
  margin-left: -6px;
  outline: 0;
  color: #5f6368;
  background: linear-gradient(90deg, #202124 90px, #5f6368 90px);
  -webkit-background-clip: text;
  background-clip: text;
  -webkit-text-fill-color: transparent;
}
.omnibox button svg { width: 20px; height: 20px; }
.extensions { display: flex; align-items: center; gap: 18px; margin-left: 17px; }
.extensions svg { width: 18px; height: 18px; }
.ext-g { width: 22px; font-family: Lato, sans-serif; font-weight: 900; font-size: 24px; }
.profile { width: 28px; height: 28px; border-radius: 50%; background: #d6712a; color: #fff; font-size: 14px; line-height: 28px; }

/* Viewport */
.viewport { flex: 1; min-height: 0; display: flex; }
.page { flex: 1; min-width: 0; overflow: hidden; }
.scrollbar { width: 21px; display: flex; flex-direction: column; align-items: center; background: #f1f1f1; padding: 8px 0; }
.thumb { width: 17px; height: 779px; margin: 7px 0 auto; background: #c1c1c1; }
.arrow-up, .arrow-down { border: 5px solid transparent; }
.arrow-up { border-top: 0; border-bottom: 6px solid #a3a3a3; }
.arrow-down { border-bottom: 0; border-top: 6px solid #505050; }

.app-header { background: var(--subtle); border-bottom: 1px solid var(--border); padding: 20px 19px 0 20px; }
.app-bar { display: flex; align-items: center; height: 40px; }
.square { width: 40px; height: 40px; display: flex; align-items: center; justify-content: center; border: 1px solid var(--border); border-radius: 8px; }
.logo { margin: 0 20px; }
.logo svg { width: 40px; height: 40px; color: #1f2328; }
.crumbs { display: flex; gap: 9px; padding-top: 1px; }
.slash { color: var(--muted); }
.search { display: flex; align-items: center; width: 438px; height: 40px; margin-left: auto; border: 1px solid var(--border); border-radius: 8px; color: var(--muted); }
.search-open { flex: 1; height: 38px; display: flex; align-items: center; gap: 10px; padding-left: 9px; }
.search kbd { display: inline-block; width: 15px; height: 20px; border: 1px solid var(--muted); border-radius: 4px; font: inherit; font-size: 14px; line-height: 18px; text-align: center; vertical-align: middle; }
.search-command { width: 39px; height: 20px; border-left: 1px solid var(--border); display: grid; place-items: center; }
.app-actions { display: flex; align-items: center; gap: 10px; margin-left: 15px; }
.app-actions::before { content: ""; width: 1px; height: 25px; margin-right: 5px; background: var(--border); }
.create { width: 68px; gap: 5px; }
.user { margin-left: -1px; }
.user svg { width: 42px; height: 42px; }
.repo-nav { display: flex; gap: 10px; margin-top: 10px; }
.repo-nav a { display: flex; align-items: center; gap: 10px; height: 59px; padding: 2px 10px 0; border-bottom: 2px solid transparent; }
.repo-nav .current { border-bottom-color: #ea8469; font-weight: 600; }

.container { max-width: 1600px; margin: 0 auto; padding: 0 40px; }
.repo-head { display: flex; align-items: center; padding: 20px 0 22px; border-bottom: 1px solid var(--border); }
.avatar-32 { width: 32px; height: 32px; margin-right: 8px; }
.repo-head h1 { font-size: 24px; line-height: 36px; font-weight: 600; }
.label { margin-left: 12px; padding: 0 9px; border: 1px solid var(--border); border-radius: 20px; color: var(--muted); font-size: 14px; line-height: 22px; font-weight: 500; }
.repo-actions { display: flex; gap: 10px; margin-left: auto; }

.btn { display: flex; align-items: center; justify-content: center; height: 40px; background: var(--subtle); border: 1px solid #d5d9dd; border-radius: 8px; font-weight: 500; white-space: nowrap; box-shadow: 0 1px 0 rgba(31, 35, 40, .04); }
.btn-sm { height: 36px; font-size: 14px; }
.caret { width: 0; height: 0; border: 5px solid transparent; border-bottom: 0; border-top-color: #3c4147; }
.count { min-width: 24px; height: 24px; margin: 0 10px 0 8px; padding: 0 7px; border-radius: 12px; background: #e6e8eb; font-size: 14px; line-height: 24px; text-align: center; }
.pin { width: 84px; gap: 12px; }
.watch { width: 166px; gap: 4px; }
.watch .count { margin: 0 6px 0 4px; }
.split { display: flex; }
.split .btn:first-child { width: 124px; border-radius: 8px 0 0 8px; }
.split .icon { margin-right: 12px; }
.split .count { margin-right: 0; }
.split .more { width: 43px; margin-left: -1px; border-radius: 0 8px 8px 0; }
.split-off .btn:first-child { color: #8c959f; }
.split-off .icon { color: #8c959f; }

.columns { display: grid; grid-template-columns: minmax(0, 1fr) 370px; gap: 30px; padding-top: 30px; }
.file-nav { display: flex; align-items: center; margin-bottom: 19px; }
.branch { width: 131px; gap: 10px; }
.stat { display: flex; align-items: center; gap: 5px; margin-left: 19px; color: var(--muted); font-size: 16px; }
.stat strong, .stat .icon, .commits strong, .commits .icon { color: var(--text); }
.file-actions { display: flex; gap: 10px; margin-left: auto; }
.go { width: 115px; }
.add { width: 119px; gap: 3px; }
.primary { position: relative; width: 124px; gap: 9px; background: #4b8646; border-color: #457c41; color: #fff; font-weight: 600; }
.primary .icon { color: #fff; }
.primary .caret { border-top-color: #fff; }
.dot { position: absolute; top: -6px; right: -4px; width: 10px; height: 10px; border-radius: 50%; background: #4465d6; }

.box { border: 1px solid var(--border); border-radius: 8px; overflow: hidden; margin-bottom: 20px; }
.commit { display: flex; align-items: center; height: 67px; padding: 0 20px 0 15px; background: var(--subtle); }
.commit-text { font-size: 16px; }
.avatar-30 { width: 30px; height: 30px; margin-right: 15px; }
.commit-meta { display: flex; align-items: center; gap: 10px; margin-left: auto; color: var(--muted); }
.sha { font-family: "DejaVu Sans Mono", monospace; font-size: 14px; }
.commits { display: flex; align-items: center; gap: 5px; margin-left: 9px; }
table { width: 100%; border-collapse: collapse; table-layout: fixed; }
td { height: 46px; padding: 0; border-top: 1px solid var(--border); }
.hovered { background: var(--subtle); }
.kind { width: 60px; padding-left: 20px; }
.folder { color: #7dabf8; }
.name { width: 322px; }
.age { width: 200px; padding-right: 20px; text-align: right; }
.muted, .age { color: var(--muted); }

.readme-head { display: flex; align-items: center; justify-content: space-between; height: 66px; padding: 0 30px 0 20px; }
.readme-head h2 { font-size: 17px; font-weight: 600; }
article { padding: 20px 40px 40px; }
article h1 { padding-bottom: 12px; border-bottom: 1px solid #d8dee4; font-size: 38px; line-height: 50px; font-weight: 600; }
article p { margin-top: 20px; font-size: 19px; line-height: 30px; }

.sidebar section { padding-bottom: 30px; }
.sidebar section + section { padding-top: 30px; border-top: 1px solid #d8dee4; }
.sidebar h2 { font-size: 18px; line-height: 30px; font-weight: 600; }
.side-title { display: flex; align-items: center; justify-content: space-between; }
.description { margin-top: 20px; font-size: 19px; line-height: 30px; }
.sidebar ul { display: grid; gap: 10px; margin-top: 21px; }
.sidebar li a { display: flex; align-items: center; gap: 14px; color: var(--muted); }
.small { display: block; color: var(--muted); font-size: 14px; line-height: 22px; }
.sidebar p.small { margin-top: 21px; }
.sidebar .link { color: var(--link); }
.page-footer { max-width: 1560px; margin: 20px auto 0; border-top: 1px solid #d8dee4; }

/* Taskbar */
.taskbar { flex: none; display: flex; align-items: center; justify-content: flex-end; height: 60px; border-top: 1px solid #a9b0c0; background: linear-gradient(90deg, #d3daec 0, #d5daeb 36%, #cde8ec 45%, #d5dde9 54%, #d8d8e7 62%, #d3dfeb 72%, #d4dfea 85%, #dcd8e7 100%); }
.apps { display: flex; align-items: center; gap: 25px; margin-right: 78px; }
.apps button svg { width: 30px; height: 30px; }
.task-search { display: flex; align-items: center; width: 273px; height: 39px; margin: 0 -8px; padding: 0 6px 0 14px; border-radius: 20px; background: #f3f4fa; box-shadow: 0 0 0 1px #c9cddd; }
.task-glass { width: 20px; height: 20px; margin-right: 11px; }
.task-search input { flex: 1; min-width: 0; color: #555; font-size: 16px; }
.task-search input::placeholder { color: #5a5a5e; opacity: 1; }
.task-art { width: 62px; height: 34px; }
.apps .running { position: relative; display: grid; place-items: center; width: 48px; height: 48px; margin-left: -9px; border-radius: 5px; background: #ebeef5; }
.running::after { content: ""; position: absolute; bottom: 0; left: 14px; width: 20px; height: 4px; border-radius: 2px; background: #0a78d4; }
.prime { display: flex; flex-direction: column; align-items: center; justify-content: center; width: 30px; height: 30px; background: #1a98ff; color: #0b1a2c; font-size: 9px; line-height: 9px; font-weight: 700; }
.prime span { display: block; }
.apps .prime svg { width: 22px; height: 6px; margin-top: 2px; }
.netflix { font: 700 25px "Roboto", sans-serif; fill: #e50914; }
.office { font: 700 11px "Open Sans", sans-serif; fill: #fff; }
.pre { font: 700 7px "Open Sans", sans-serif; fill: #fff; }
.tray { display: flex; align-items: center; padding-right: 25px; color: #1c1c1c; }
.tray svg { width: 20px; height: 20px; }
.keyboard { margin-left: 20px; }
.status { display: flex; gap: 10px; margin-left: 20px; }
.clock { width: 91px; font-size: 14px; line-height: 20px; text-align: right; }
.clock span { display: block; }
.badge { width: 20px; height: 20px; margin-left: 9px; border-radius: 50%; background: #0a78d4; color: #fff; font-size: 12px; line-height: 20px; text-align: center; }
```
